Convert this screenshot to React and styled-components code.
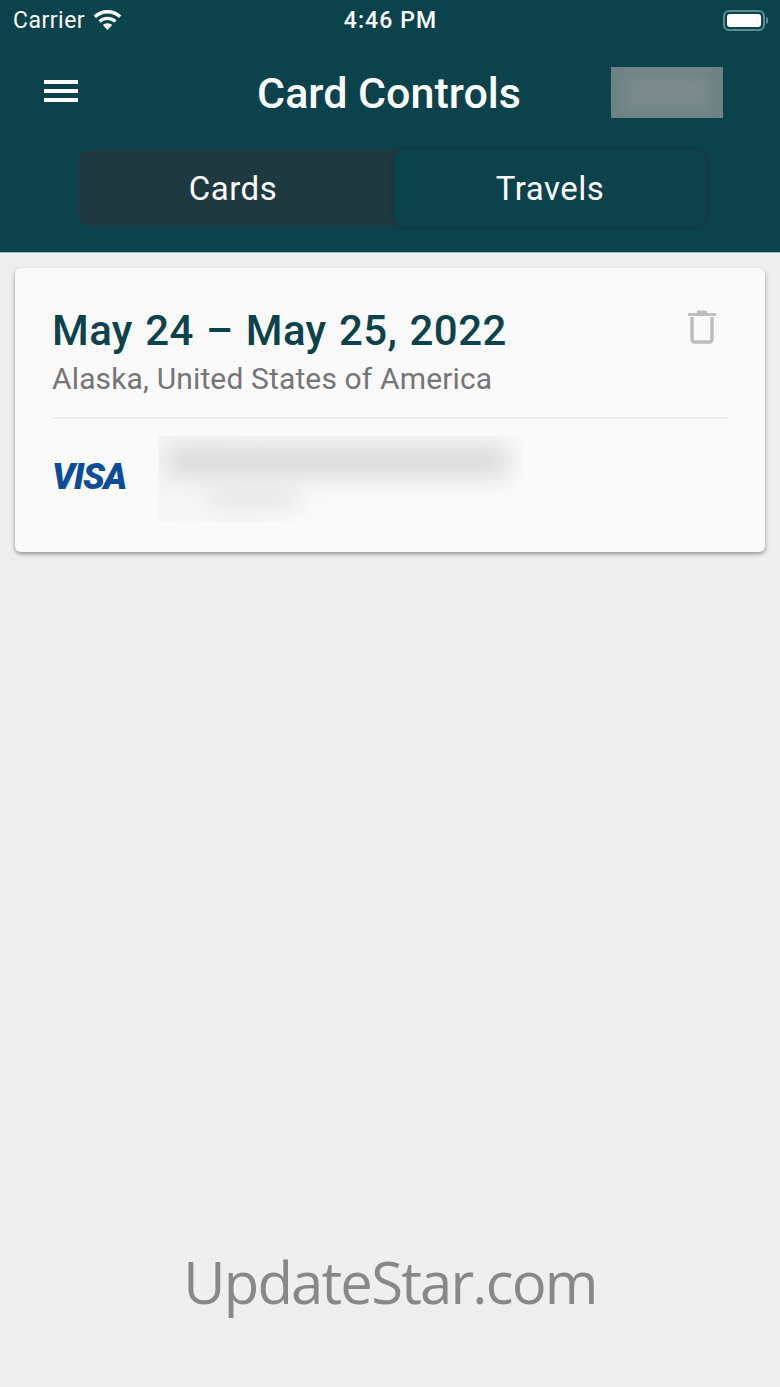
import React from 'react';
import styled, { createGlobalStyle } from 'styled-components';

const GlobalStyle = createGlobalStyle`
  html, body {
    margin: 0;
    padding: 0;
    background: #efefef;
    font-family: 'Roboto', sans-serif;
  }
`;

const Page = styled.div`
  width: 780px;
  height: 1387px;
  display: flex;
  flex-direction: column;
  overflow: hidden;
`;

const Header = styled.header`
  height: 253px;
  box-sizing: border-box;
  background: #0c424c;
  border-bottom: 1px solid #9db6bb;
  color: #fff;
  display: flex;
  flex-direction: column;
`;

const StatusBar = styled.div`
  height: 40px;
  padding: 0 12px 0 13px;
  display: grid;
  grid-template-columns: 1fr auto 1fr;
  align-items: center;
  font-size: 23px;
  letter-spacing: 0.5px;
`;

const Carrier = styled.div`
  display: flex;
  align-items: center;
  gap: 8px;
`;

const Clock = styled.div`
  font-weight: 500;
  letter-spacing: 1.1px;
`;

const Battery = styled.div`
  justify-self: end;
  display: flex;
  align-items: center;
  gap: 1px;
`;

const BatteryBody = styled.div`
  width: 42px;
  height: 21px;
  box-sizing: border-box;
  padding: 2px;
  border: 2px solid #5f8a91;
  border-radius: 6px;

  div {
    height: 100%;
    background: #fff;
    border-radius: 3px;
  }
`;

const BatteryTip = styled.div`
  width: 2px;
  height: 7px;
  background: #5f8a91;
  border-radius: 0 2px 2px 0;
`;

const NavRow = styled.div`
  height: 110px;
  padding: 0 57px 0 44px;
  display: grid;
  grid-template-columns: 123px 1fr 112px;
  align-items: center;
`;

const Burger = styled.div`
  width: 34px;
  display: flex;
  flex-direction: column;
  gap: 5px;
  margin-top: -9px;

  span {
    height: 4px;
    background: #fff;
  }
`;

const Title = styled.h1`
  margin: -5px 0 0;
  font-size: 43px;
  font-weight: 500;
  text-align: center;
  color: #fff;
`;

const BlurredLogo = styled.div`
  height: 51px;
  margin-top: -5px;
  background: #6e8285;
  overflow: hidden;
  display: flex;
  align-items: center;
  justify-content: center;

  div {
    width: 84px;
    height: 34px;
    background: #7b8b8c;
    filter: blur(7px);
  }
`;

const Segments = styled.div`
  margin: 0 74px 0 78px;
  height: 76px;
  display: grid;
  grid-template-columns: 316px 1fr;
  background: #1f3941;
  border-radius: 12px;
`;

const Segment = styled.div`
  display: flex;
  align-items: center;
  justify-content: center;
  padding-right: ${({ $active }) => ($active ? '0' : '6px')};
  font-size: 33px;
  letter-spacing: 0.5px;
  border-radius: 12px;
  background: ${({ $active }) => ($active ? '#0c424c' : 'transparent')};
  box-shadow: ${({ $active }) => ($active ? '0 0 4px 1px #17333b' : 'none')};
`;

const Content = styled.main`
  flex: 1;
  padding: 15px 15px 0;
  display: flex;
  flex-direction: column;
`;

const Card = styled.section`
  height: 284px;
  box-sizing: border-box;
  padding: 37px 36px 0 37px;
  background: #fafafa;
  border-radius: 6px;
  box-shadow: 0 2px 4px rgba(0, 0, 0, 0.4);
`;

const CardTop = styled.div`
  height: 114px;
  box-sizing: border-box;
  display: flex;
  justify-content: space-between;
  border-bottom: 2px solid #ececec;
`;

const Dates = styled.h2`
  margin: 0;
  font-size: 42px;
  line-height: 52px;
  font-weight: 500;
  letter-spacing: 0.4px;
  word-spacing: 1.5px;
  color: #0c424c;
`;

const Place = styled.p`
  margin: 5px 0 0;
  font-size: 30px;
  line-height: 34px;
  letter-spacing: 0.14px;
  color: #757575;
`;

const TrashButton = styled.div`
  margin: 4px 13px 0 0;
  line-height: 0;
`;

const CardRow = styled.div`
  display: flex;
  align-items: flex-start;
  gap: 31px;
  padding-top: 17px;
`;

const VisaMark = styled.div`
  width: 75px;
  margin-top: 17px;
  font-size: 36px;
  line-height: 48px;
  font-weight: 900;
  font-style: italic;
  letter-spacing: -1.3px;
  color: #0a4c97;
  white-space: nowrap;
`;

const BlurredText = styled.div`
  width: 364px;
  height: 86px;
  overflow: hidden;
  display: flex;
  flex-direction: column;
  background: linear-gradient(90deg, #f6f6f6 0, #f8f8f8 40%, #fafafa 100%);
  background-size: 140px 100%;
  background-repeat: no-repeat;
`;

const BlurLine = styled.div`
  width: ${({ $w }) => $w}px;
  height: ${({ $h }) => $h}px;
  margin: ${({ $m }) => $m};
  background: ${({ $c }) => $c};
  filter: blur(12px);
`;

const Watermark = styled.div`
  padding-bottom: 70px;
  text-align: center;
  font-family: 'Open Sans', sans-serif;
  font-size: 58px;
  line-height: 70px;
  letter-spacing: -1.8px;
  color: #888;
  margin-top: auto;
`;

function WifiIcon() {
  return (
    <svg width="29" height="21" viewBox="0 0 29 21" fill="#fff">
      <path d="M14.5 0C9 0 4.2 2 .6 5.6l2.4 2.500C6 5.100 10 3.400 14.500 3.400S23 5.100 26 8.100l2.400-2.500C24.800 2 20 0 14.500 0z" />
      <path d="M14.500 6.700c-3.500 0-6.700 1.300-9.100 3.500l2.400 2.500c1.800-1.600 4.100-2.600 6.700-2.600s4.900 1 6.700 2.600l2.400-2.500c-2.400-2.200-5.600-3.500-9.100-3.500z" />
      <path d="M14.500 13.300c-1.800 0-3.400.7-4.600 1.800l4.600 4.800 4.600-4.800c-1.200-1.100-2.800-1.800-4.600-1.800z" />
    </svg>
  );
}

function TrashIcon() {
  return (
    <svg width="28" height="35" viewBox="0 0 28 35" fill="none">
      <path d="M0 4h28v3H0zM9 1.500h10V4H9z" fill="#bdbdbd" />
      <path d="M4 8v22.500a2.500 2.500 0 0 0 2.500 2.500h15a2.500 2.500 0 0 0 2.500-2.500V8" stroke="#bdbdbd" strokeWidth="3.500" />
    </svg>
  );
}

export default function App() {
  return (
    <>
      <GlobalStyle />
      <Page>
        <Header>
          <StatusBar>
            <Carrier>
              Carrier
              <WifiIcon />
            </Carrier>
            <Clock>4:46 PM</Clock>
            <Battery>
              <BatteryBody>
                <div />
              </BatteryBody>
              <BatteryTip />
            </Battery>
          </StatusBar>
          <NavRow>
            <Burger>
              <span />
              <span />
              <span />
            </Burger>
            <Title>Card Controls</Title>
            <BlurredLogo>
              <div />
            </BlurredLogo>
          </NavRow>
          <Segments>
            <Segment>Cards</Segment>
            <Segment $active>Travels</Segment>
          </Segments>
        </Header>
        <Content>
          <Card>
            <CardTop>
              <div>
                <Dates>May 24 – May 25, 2022</Dates>
                <Place>Alaska, United States of America</Place>
              </div>
              <TrashButton>
                <TrashIcon />
              </TrashButton>
            </CardTop>
            <CardRow>
              <VisaMark>VISA</VisaMark>
              <BlurredText>
                <BlurLine $w={340} $h={30} $m="10px 0 0 10px" $c="#d8d8d8" />
                <BlurLine $w={90} $h={16} $m="14px 0 0 50px" $c="#dedede" />
              </BlurredText>
            </CardRow>
          </Card>
          <Watermark>UpdateStar.com</Watermark>
        </Content>
      </Page>
    </>
  );
}
